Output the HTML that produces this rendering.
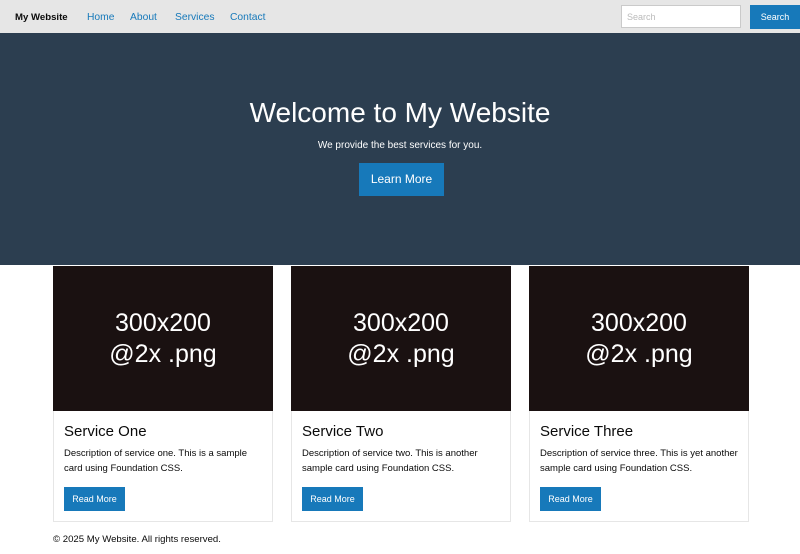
<!DOCTYPE html>
<html><head><style>
*{box-sizing:border-box;margin:0;padding:0}
body{width:800px;height:554px;font-family:"Liberation Sans",Helvetica,Arial,sans-serif;background:#fff;color:#0a0a0a;overflow:hidden;position:relative}
.nav{height:33px;background:#e6e6e6;position:relative}
.nav span{position:absolute;top:12px;font-size:10.3px;color:#1779ba}
.nav .brand{left:15px;font-weight:bold;color:#0a0a0a;font-size:9.6px;top:12px}
.inp{position:absolute;left:621px;top:5px;width:120px;height:23px;background:#fff;border:1px solid #cacaca;font-size:9px;color:#bbb;padding:6px 5px}
.btn{position:absolute;left:750px;top:5px;width:50px;height:24px;background:#1779ba;color:#fff;font-size:9px;text-align:center;line-height:24px}
.hero{position:absolute;top:33px;left:0;width:800px;height:232px;background:#2c3e50;color:#fff;text-align:center}
.hero h1{position:absolute;top:64px;width:100%;font-weight:normal;font-size:28px}
.hero p{position:absolute;top:107px;width:100%;font-size:10px}
.hero .lm{position:absolute;left:359px;top:130px;width:85px;height:33px;background:#1779ba;font-size:12px;line-height:33px}
.card{position:absolute;top:266px;width:220px;height:256px;border:1px solid #e6e6e6}
.img{height:145px;background:#1a1111;color:#fff;font-size:25px;text-align:center;padding-top:42px;line-height:31px;margin:-1px -1px 0}
.card h4{font-weight:normal;font-size:15px;margin:12px 0 0 10px}
.card p{font-size:9.5px;line-height:15px;margin:6px 10px 0 10px}
.rm{position:absolute;left:10px;top:220px;width:61px;height:24px;background:#1779ba;color:#fff;font-size:9px;text-align:center;line-height:24px}
.foot{position:absolute;top:534px;left:53px;font-size:9.6px}
</style></head><body>
<div class="nav"><span class="brand">My Website</span><span style="left:87px">Home</span><span style="left:130px">About</span><span style="left:175px">Services</span><span style="left:230px">Contact</span>
<div class="inp">Search</div><div class="btn">Search</div></div>
<div class="hero"><h1>Welcome to My Website</h1><p>We provide the best services for you.</p><div class="lm">Learn More</div></div>
<div class="card" style="left:53px"><div class="img">300x200<br>@2x .png</div><h4>Service One</h4><p>Description of service one. This is a sample card using Foundation CSS.</p><div class="rm">Read More</div></div>
<div class="card" style="left:291px"><div class="img">300x200<br>@2x .png</div><h4>Service Two</h4><p>Description of service two. This is another sample card using Foundation CSS.</p><div class="rm">Read More</div></div>
<div class="card" style="left:529px"><div class="img">300x200<br>@2x .png</div><h4>Service Three</h4><p>Description of service three. This is yet another sample card using Foundation CSS.</p><div class="rm">Read More</div></div>
<div class="foot">© 2025 My Website. All rights reserved.</div>
</body></html>
